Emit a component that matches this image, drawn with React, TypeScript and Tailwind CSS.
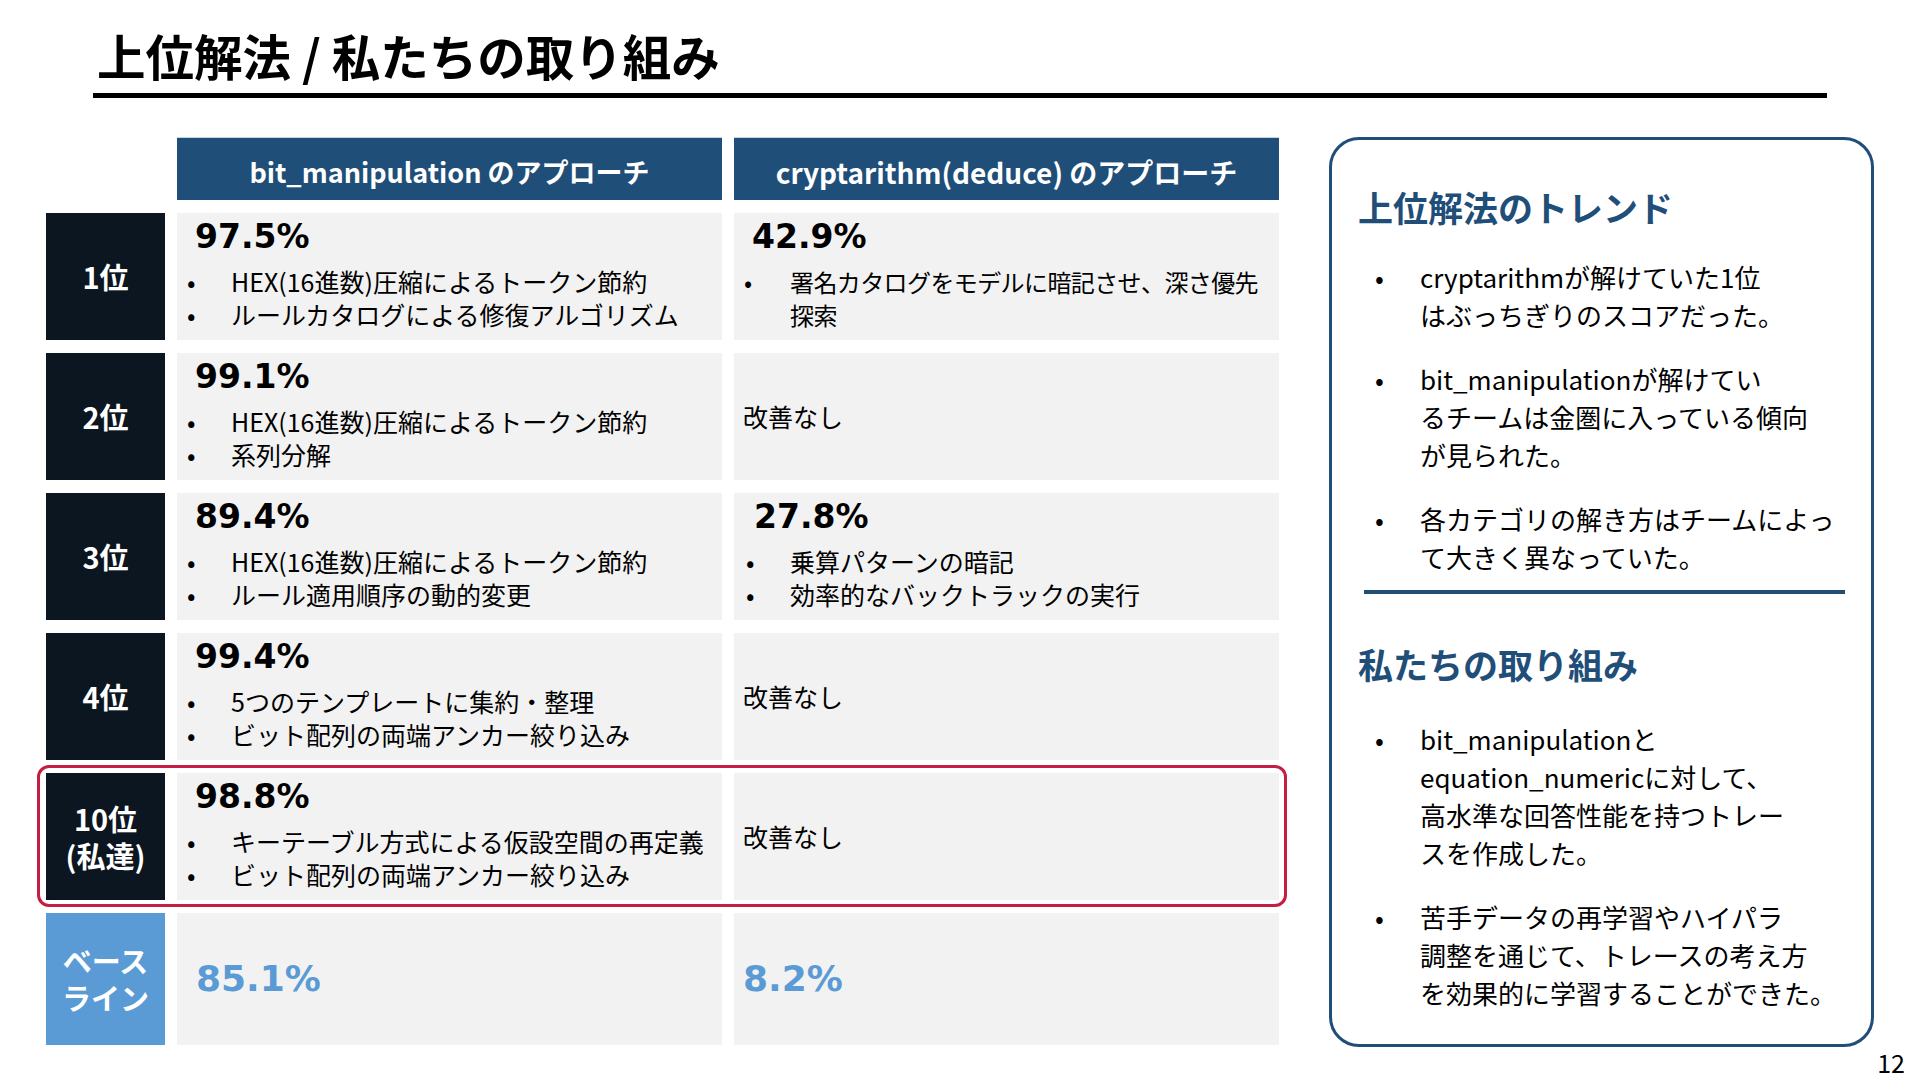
import React from 'react';

type Row = {
  label: React.ReactNode;
  labelBg: string;
  col1: React.ReactNode;
  col2: React.ReactNode;
  highlight?: boolean;
  tall?: boolean;
};

const Score: React.FC<{ value: string }> = ({ value }) => (
  <div className="pl-[8px] font-['DejaVu_Sans',sans-serif] font-bold text-[33px] leading-[40px] text-black">{value}</div>
);

const Bullets: React.FC<{ items: React.ReactNode[] }> = ({ items }) => (
  <ul className="mt-[8px]">
    {items.map((item, i) => (
      <li key={i} className="flex text-[25px] leading-[33px] text-black whitespace-nowrap">
        <span className="w-[44px] shrink-0">•</span>
        <span>{item}</span>
      </li>
    ))}
  </ul>
);

const ScoreCell: React.FC<{ value: string; items: React.ReactNode[]; pl?: string }> = ({ value, items, pl = 'pl-[10px]' }) => (
  <div className={`bg-[#f2f2f2] ${pl} pt-[4px]`}>
    <Score value={value} />
    <Bullets items={items} />
  </div>
);

const NoChange: React.FC = () => (
  <div className="bg-[#f2f2f2] pl-[9px] flex items-center text-[25px] text-black">改善なし</div>
);

const BaseCell: React.FC<{ value: string; pl: string }> = ({ value, pl }) => (
  <div className={`bg-[#f2f2f2] ${pl} flex items-center`}>
    <span className="font-['DejaVu_Sans',sans-serif] font-bold text-[36px] text-[#5b9bd5]">{value}</span>
  </div>
);

const rows: Row[] = [
  {
    label: '1位',
    labelBg: 'bg-[#0c1620]',
    col1: <ScoreCell value="97.5%" items={['HEX(16進数)圧縮によるトークン節約', 'ルールカタログによる修復アルゴリズム']} />,
    col2: (
      <div className="bg-[#f2f2f2] pl-[10px] pt-[4px]">
        <Score value="42.9%" />
        <ul className="mt-[8px]">
          <li className="flex text-[24px] leading-[33px] text-black tracking-[-0.6px]">
            <span className="w-[46px] shrink-0">•</span>
            <span>
              署名カタログをモデルに暗記させ、深さ優先
              <br />
              探索
            </span>
          </li>
        </ul>
      </div>
    ),
  },
  {
    label: '2位',
    labelBg: 'bg-[#0c1620]',
    col1: <ScoreCell value="99.1%" items={['HEX(16進数)圧縮によるトークン節約', '系列分解']} />,
    col2: <NoChange />,
  },
  {
    label: '3位',
    labelBg: 'bg-[#0c1620]',
    col1: <ScoreCell value="89.4%" items={['HEX(16進数)圧縮によるトークン節約', 'ルール適用順序の動的変更']} />,
    col2: <ScoreCell value="27.8%" items={['乗算パターンの暗記', '効率的なバックトラックの実行']} pl="pl-[12px]" />,
  },
  {
    label: '4位',
    labelBg: 'bg-[#0c1620]',
    col1: <ScoreCell value="99.4%" items={['5つのテンプレートに集約・整理', 'ビット配列の両端アンカー絞り込み']} />,
    col2: <NoChange />,
  },
  {
    label: (
      <>
        <div>10位</div>
        <div>(私達)</div>
      </>
    ),
    labelBg: 'bg-[#0c1620]',
    col1: <ScoreCell value="98.8%" items={['キーテーブル方式による仮設空間の再定義', 'ビット配列の両端アンカー絞り込み']} />,
    col2: <NoChange />,
    highlight: true,
  },
  {
    label: (
      <>
        <div>ベース</div>
        <div>ライン</div>
      </>
    ),
    labelBg: 'bg-[#5b9bd5]',
    col1: <BaseCell value="85.1%" pl="pl-[19px]" />,
    col2: <BaseCell value="8.2%" pl="pl-[9px]" />,
    tall: true,
  },
];

const trends: React.ReactNode[] = [
  <>cryptarithmが解けていた1位<br />はぶっちぎりのスコアだった。</>,
  <>bit_manipulationが解けてい<br />るチームは金圏に入っている傾向<br />が見られた。</>,
  <>各カテゴリの解き方はチームによっ<br />て大きく異なっていた。</>,
];

const ours: React.ReactNode[] = [
  <>bit_manipulationと<br />equation_numericに対して、<br />高水準な回答性能を持つトレー<br />スを作成した。</>,
  <>苦手データの再学習やハイパラ<br />調整を通じて、トレースの考え方<br />を効果的に学習することができた。</>,
];

const PanelList: React.FC<{ items: React.ReactNode[]; className: string }> = ({ items, className }) => (
  <ul className={`flex flex-col gap-[26px] ml-[17px] ${className}`}>
    {items.map((item, i) => (
      <li key={i} className="flex text-[26px] leading-[38px] text-black whitespace-nowrap">
        <span className="w-[45px] shrink-0">•</span>
        <span>{item}</span>
      </li>
    ))}
  </ul>
);

const App: React.FC = () => {
  return (
    <div className="relative w-[1920px] h-[1080px] overflow-hidden bg-white font-['Noto_Sans_CJK_JP',sans-serif] text-black">
      {/* Title */}
      <h1 className="ml-[97px] pt-[27px] text-[48.5px] leading-[56px] font-bold">
        上位解法 / 私たちの取り組み
      </h1>
      <div className="ml-[93px] mt-[10px] w-[1734px] h-[5px] bg-black" />

      <div className="flex mt-[39px]">
        {/* Table */}
        <div className="ml-[46px] w-[1233px] flex flex-col">
          <div className="grid grid-cols-[119px_545px_545px] gap-x-[12px] h-[63px]">
            <div />
            <div className="bg-[#1f4e79] border-t border-[#c9d3de] flex items-center justify-center pt-[6px] text-white font-bold text-[27px]">
              bit_manipulation のアプローチ
            </div>
            <div className="bg-[#1f4e79] border-t border-[#c9d3de] flex items-center justify-center pt-[6px] text-white font-bold text-[28px]">
              cryptarithm(deduce) のアプローチ
            </div>
          </div>

          {rows.map((row, i) => (
            <div
              key={i}
              className={`relative grid grid-cols-[119px_545px_545px] gap-x-[12px] mt-[13px] ${row.tall ? 'h-[132px]' : 'h-[127px]'}`}
            >
              <div className={`${row.labelBg} flex items-center justify-center text-center text-white font-bold text-[29px] leading-[37px]`}>
                <div>{row.label}</div>
              </div>
              {row.col1}
              {row.col2}
              {row.highlight && (
                <div className="absolute -left-[9px] -right-[8px] -top-[8px] -bottom-[7px] border-[3px] border-[#c41f43] rounded-[12px] pointer-events-none" />
              )}
            </div>
          ))}
        </div>

        {/* Right panel */}
        <div className="ml-[50px] w-[545px] h-[910px] border-[3px] border-[#1f4e79] rounded-[30px] pl-[26px] pt-[44px]">
          <h2 className="text-[35px] leading-[46px] font-bold text-[#1f4e79]">上位解法のトレンド</h2>
          <PanelList items={trends} className="mt-[28px]" />
          <div className="ml-[6px] mt-[14px] w-[481px] h-[4px] bg-[#1f4e79]" />
          <h2 className="mt-[47px] text-[35px] leading-[46px] font-bold text-[#1f4e79]">私たちの取り組み</h2>
          <PanelList items={ours} className="mt-[33px]" />
        </div>
      </div>

      <div className="absolute right-[15px] bottom-[3px] text-[25px] leading-[30px]">12</div>
    </div>
  );
};

export default App;
